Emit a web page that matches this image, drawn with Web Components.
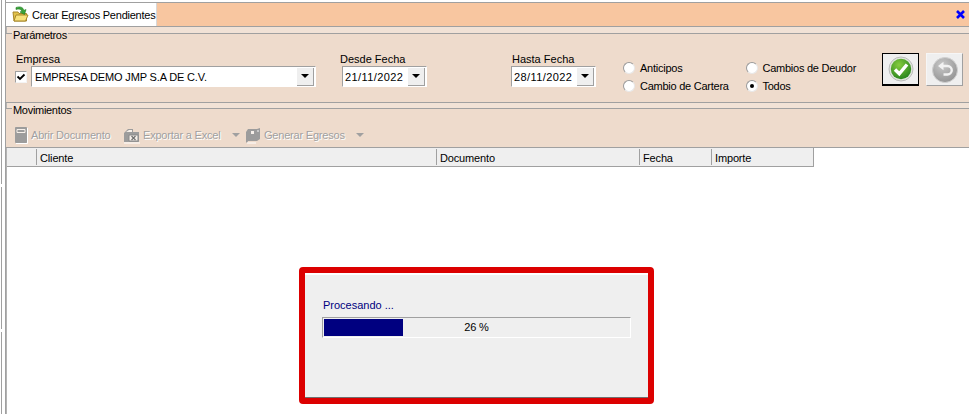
<!DOCTYPE html>
<html lang="es">
<head>
<meta charset="UTF-8">
<title>Crear Egresos Pendientes</title>
<style>
  html, body { margin: 0; background: #fff; }
  body { font: 11px "Liberation Sans", Arial, sans-serif; letter-spacing: -.15px; color: #000; overflow: hidden; }
</style>
</head>
<body>
<egresos-app>
  <erp-tab-bar slot="top">Crear Egresos Pendientes</erp-tab-bar>

  <erp-group slot="params" legend="Parámetros" style="height:68px">
    <div class="params" style="display:grid;grid-template-columns:325px 171px 112px 259px auto;padding:19px 0 0 9px">
      <erp-field label="Empresa" indent="1">
        <div style="display:flex;align-items:center;gap:4px">
          <erp-check checked></erp-check>
          <erp-combo width="285" pad="3" value="EMPRESA DEMO JMP S.A DE C.V."></erp-combo>
        </div>
      </erp-field>
      <erp-field label="Desde Fecha">
        <erp-combo width="85" pad="2" value="21/11/2022" style="margin-left:2px;letter-spacing:.4px"></erp-combo>
      </erp-field>
      <erp-field label="Hasta Fecha" indent="1">
        <erp-combo width="85" pad="2" value="28/11/2022" style="letter-spacing:.4px"></erp-combo>
      </erp-field>
      <div style="display:grid;grid-template-columns:122.5px auto;grid-auto-rows:18px;margin-top:6px">
        <erp-radio>Anticipos</erp-radio>
        <erp-radio>Cambios de Deudor</erp-radio>
        <erp-radio>Cambio de Cartera</erp-radio>
        <erp-radio checked>Todos</erp-radio>
      </div>
      <div style="display:flex;gap:7px">
        <erp-icon-button kind="ok" focused></erp-icon-button>
        <erp-icon-button kind="back"></erp-icon-button>
      </div>
    </div>
  </erp-group>

  <erp-group slot="moves" legend="Movimientos" style="height:38px">
    <div style="display:flex;align-items:center;height:16px;padding:18px 0 0 9px">
      <erp-tool icon="doc" style="width:108px">Abrir Documento</erp-tool>
      <erp-tool icon="excel" menu style="width:122px">Exportar a Excel</erp-tool>
      <erp-tool icon="gen" menu>Generar Egresos</erp-tool>
    </div>
  </erp-group>

  <erp-grid-header slot="grid">
    <span></span><span>Cliente</span><span>Documento</span><span>Fecha</span><span>Importe</span>
  </erp-grid-header>
</egresos-app>
<erp-progress-dialog value="26">Procesando ...</erp-progress-dialog>

<script>
  // small helper so each class only has to hand over its markup
  class Base extends HTMLElement {
    connectedCallback() {
      if (this.shadowRoot) return;
      this.attachShadow({mode: 'open'});
      this.shadowRoot.innerHTML = this.markup();
    }
  }

  customElements.define('egresos-app', class extends Base {
    markup() {
      return `<style>
        :host { display: flex; height: 414px; overflow: hidden; }
        .rail { width: 5px; flex: none; display: flex; flex-direction: column; gap: 3px; }
        .rail i { display: block; width: 1px; margin-left: 1px; background: #a0a0a0; }
        .main { flex: 1; min-width: 0; padding-top: 2px; border-left: 1px solid #a0a0a0; box-sizing: border-box; }
        .inner { border-left: 1px solid #b4b4b4; height: 100%; }
        .gap1 { height: 6px; background: #f1e2d6; }
        .gap2 { height: 5px; background: #f1e2d6; }
      </style>
      <div class="rail"><i style="height:184px"></i><i style="height:142px"></i><i style="height:82px"></i></div>
      <div class="main"><div class="inner">
        <slot name="top"></slot>
        <div class="gap1"></div>
        <slot name="params"></slot>
        <div class="gap2"></div>
        <slot name="moves"></slot>
        <slot name="grid"></slot>
      </div></div>`;
    }
  });

  customElements.define('erp-tab-bar', class extends Base {
    markup() {
      return `<style>
        :host { display: flex; height: 23px; margin-left: -2px; border-top: 1px solid #a0a0a0; border-bottom: 1px solid #a0a0a0; background: #f8c6a0; }
        .tab { display: flex; align-items: center; gap: 3px; width: 152px; padding-left: 6px; box-sizing: border-box; background: #fff; border-left: 1px solid #a0a0a0; border-right: 1px solid #d8d8d8; white-space: nowrap; letter-spacing: -.23px; }
        .x { margin-left: auto; margin-right: 4px; align-self: center; }
        svg { display: block; flex: none; }
      </style>
      <div class="tab">
        <svg width="17" height="17" viewBox="0 0 17 17">
          <path d="M1 6h5l1 1.500h7.500V15H2z" fill="#e2c24a" stroke="#a8872a"/>
          <path d="M2 15l2-6h12l-2.500 6z" fill="#f8e27c" stroke="#a8872a"/>
          <path d="M4 1.500c4-1.300 7-.5 8 3l2-1-1.500 5-4.500-2.500 2-.8C9 3.200 7 2.500 4 3.500z" fill="#3aa43a" stroke="#1d7a1d" stroke-width=".6"/>
        </svg>
        <slot></slot>
      </div>
      <svg class="x" width="9" height="9" viewBox="0 0 9 9"><path d="M1 1l7 7M8 1l-7 7" stroke="#0000ff" stroke-width="2.600"/></svg>`;
    }
  });

  customElements.define('erp-group', class extends Base {
    markup() {
      return `<style>
        :host { display: block; position: relative; margin-left: -2px; background: #eedbcc; border-top: 1px solid #a0a0a0; border-bottom: 1px solid #a0a0a0; border-left: 1px solid #a0a0a0; }
        .legend { position: absolute; left: 6px; top: -5px; padding: 0 1px; line-height: 13px; letter-spacing: -.3px; color: #000; background: linear-gradient(#f1e2d6 40%, #eedbcc 40%); }
      </style>
      <span class="legend">${this.getAttribute('legend')}</span>
      <slot></slot>`;
    }
  });

  customElements.define('erp-field', class extends Base {
    markup() {
      const ml = this.hasAttribute('indent') ? 1 : 0;
      return `<style>
        :host { display: block; }
        .l { display: block; height: 13px; line-height: 13px; margin-left: ${ml}px; letter-spacing: 0; }
      </style>
      <span class="l">${this.getAttribute('label')}</span>
      <slot></slot>`;
    }
  });

  customElements.define('erp-check', class extends Base {
    markup() {
      return `<style>
        :host { display: block; width: 12px; height: 12px; background: #fff; box-sizing: border-box; border: 1px solid; border-color: #a0a0a0 #f4f4f4 #f4f4f4 #a0a0a0; }
        svg { display: block; }
      </style>
      <svg width="10" height="10" viewBox="0 0 10 10"><path d="M1.500 4.500l2.500 2.500 4.500-4.500" fill="none" stroke="#000" stroke-width="1.800"/></svg>`;
    }
  });

  customElements.define('erp-combo', class extends Base {
    markup() {
      return `<style>
        :host { display: flex; align-items: center; box-sizing: border-box; width: ${this.getAttribute('width')}px; height: 21px; background: #fff; border: 1px solid; border-color: #a0a0a0 #fff #fff #a0a0a0; }
        .v { flex: 1; padding-left: ${this.getAttribute('pad')}px; white-space: nowrap; overflow: hidden; }
        .b { flex: none; width: 16px; height: 17px; margin-right: 1px; background: #efefef; border-right: 1px solid #a0a0a0; border-bottom: 1px solid #a0a0a0; display: flex; align-items: center; justify-content: center; }
        .b i { border: 4px solid transparent; border-top: 4px solid #000; border-bottom: 0; }
      </style>
      <span class="v">${this.getAttribute('value')}</span>
      <span class="b"><i></i></span>`;
    }
  });

  customElements.define('erp-radio', class extends Base {
    markup() {
      const dot = this.hasAttribute('checked') ? '<i></i>' : '';
      return `<style>
        :host { display: flex; align-items: center; gap: 5px; white-space: nowrap; letter-spacing: -.25px; }
        .c { width: 12px; height: 12px; box-sizing: border-box; border-radius: 50%; background: #fff; border: 1px solid; border-color: #9a9a9a #e8e8e8 #e8e8e8 #9a9a9a; display: flex; align-items: center; justify-content: center; }
        i { width: 4px; height: 4px; border-radius: 50%; background: #000; }
      </style>
      <span class="c">${dot}</span><slot></slot>`;
    }
  });

  customElements.define('erp-icon-button', class extends Base {
    markup() {
      const ok = this.getAttribute('kind') === 'ok';
      const border = this.hasAttribute('focused')
        ? 'border: 1px solid #000; border-width: 1px 1px 2px 1px;'
        : 'border: 1px solid; border-color: #f6f6f6 #a0a0a0 #a0a0a0 #f6f6f6;';
      const icon = ok
        ? `<svg width="26" height="26" viewBox="0 0 26 26">
            <defs><radialGradient id="g" cx=".4" cy=".3" r=".8"><stop offset="0" stop-color="#86cc3e"/><stop offset="1" stop-color="#1f7d1a"/></radialGradient></defs>
            <circle cx="13" cy="13" r="12" fill="#dfe6dc" stroke="#bcbcbc"/>
            <circle cx="13" cy="13" r="10.200" fill="url(#g)"/>
            <path d="M7 13.500l4.300 4.300 7.700-9.300" fill="none" stroke="#fff" stroke-width="3.400"/>
          </svg>`
        : `<svg width="28" height="28" viewBox="0 0 28 28">
            <defs><radialGradient id="h" cx=".4" cy=".3" r=".8"><stop offset="0" stop-color="#c8c8c8"/><stop offset="1" stop-color="#8e8e8e"/></radialGradient></defs>
            <circle cx="14" cy="14" r="12.500" fill="url(#h)" stroke="#d0d0d0"/>
            <path d="M11.500 10h5a4 4 0 0 1 0 8.500h-4" fill="none" stroke="#f2f2f2" stroke-width="2.400"/>
            <path d="M12.500 5.800v8.400L7 10z" fill="#f2f2f2"/>
          </svg>`;
      return `<style>
        :host { display: flex; align-items: center; justify-content: center; box-sizing: border-box; width: 37px; height: 33px; background: #efefef; ${border} }
        svg { display: block; }
      </style>${icon}`;
    }
  });

  const toolIcons = {
    doc: `<svg width="13" height="17" viewBox="0 0 13 17"><path d="M.5.5h11v15H.5z" fill="#9c9c9c" stroke="#9c9c9c"/><path d="M2 2.500h8v3H2z" fill="none" stroke="#f6f0ea"/><path d="M12.500 1v15.500H1" fill="none" stroke="#fff"/></svg>`,
    excel: `<svg width="17" height="17" viewBox="0 0 17 17"><path d="M1 6l4-4h5v3h6v10H1z" fill="#9c9c9c"/><path d="M3 5l3-2h3v2z" fill="#f6f0ea"/><path d="M6 8h9v6H6z" fill="#f6f0ea" stroke="#8a8a8a"/><path d="M8.500 9l4 4M12.500 9l-4 4" stroke="#6e6e6e" stroke-width="1.200"/><path d="M1 16h16" stroke="#fff"/></svg>`,
    gen: `<svg width="16" height="17" viewBox="0 0 16 17"><path d="M3 2h9l3-1v11l-3 2H3l-1 2-1-1V5z" fill="#9c9c9c"/><path d="M6 4h3v3H6z" fill="#f6f0ea"/><path d="M12 3h2v2h-2z" fill="#c8c8c8"/><path d="M2 16h9" stroke="#fff"/></svg>`
  };

  customElements.define('erp-tool', class extends Base {
    markup() {
      const menu = this.hasAttribute('menu') ? '<i></i>' : '';
      return `<style>
        :host { display: flex; align-items: center; gap: 3px; color: #a0a0a0; text-shadow: 1px 1px 0 #fff; white-space: nowrap; letter-spacing: -.2px; }
        svg { display: block; flex: none; }
        i { flex: none; margin-left: 8px; border: 4px solid transparent; border-top: 4px solid #a0a0a0; border-bottom: 0; }
      </style>${toolIcons[this.getAttribute('icon')]}<slot></slot>${menu}`;
    }
  });

  customElements.define('erp-grid-header', class extends Base {
    markup() {
      return `<style>
        :host { display: grid; width: 807px; height: 18px; overflow: hidden; grid-template-columns: 30px 400px 203px 72px 102px; background: #efefef; border-bottom: 1px solid #a0a0a0; }
        ::slotted(span) { border-right: 1px solid #a0a0a0; padding-left: 3px; box-sizing: border-box; height: 16px; line-height: 18px; margin: 1px 0; }
        ::slotted(span:last-child) { height: 18px; line-height: 20px; margin: 0; }
      </style><slot></slot>`;
    }
  });

  customElements.define('erp-progress-dialog', class extends Base {
    markup() {
      const v = this.getAttribute('value');
      return `<style>
        :host { position: absolute; left: 299px; top: 267px; width: 355px; height: 137px; box-sizing: border-box; border: 6px solid #dc0000; border-radius: 4px; background: #efefef; }
        .in { height: 100%; box-sizing: border-box; border-top: 2px solid #fff; border-bottom: 1px solid #707070; padding: 24px 0 0 17px; }
        .t { display: block; color: #000080; line-height: 13px; margin-left: 1px; letter-spacing: 0; }
        .bar { position: relative; margin-top: 5px; width: 309px; height: 21px; box-sizing: border-box; border: 1px solid; border-color: #a0a0a0 #fff #fff #a0a0a0; padding: 1px; }
        .fill { height: 100%; background: #000080; width: ${v}%; }
        .pct { position: absolute; inset: 0; text-align: center; line-height: 19px; }
      </style>
      <div class="in">
        <span class="t"><slot></slot></span>
        <div class="bar"><div class="fill"></div><span class="pct">${v} %</span></div>
      </div>`;
    }
  });
</script>
</body>
</html>
